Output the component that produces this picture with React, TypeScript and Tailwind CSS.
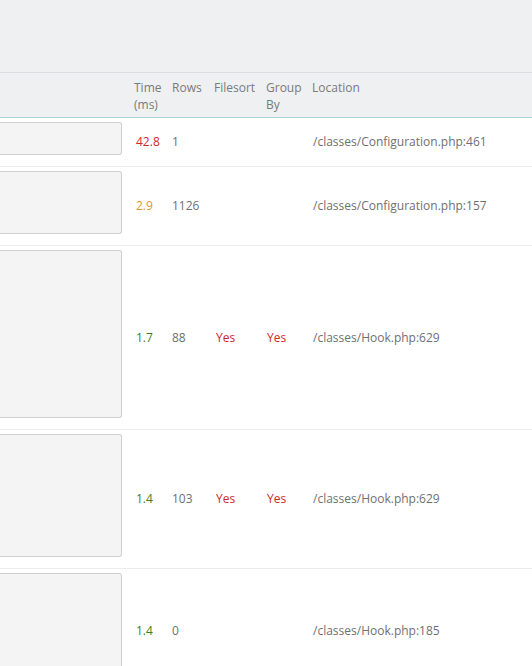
const rows = [
  { h: "h-[33px]", time: "42.8", tone: "text-[#d0272c]", rows: "1", filesort: "", group: "", loc: "/classes/Configuration.php:461" },
  { h: "h-[63px]", time: "2.9", tone: "text-[#e0952f]", rows: "1126", filesort: "", group: "", loc: "/classes/Configuration.php:157" },
  { h: "h-[168px]", time: "1.7", tone: "text-[#3f7f23]", rows: "88", filesort: "Yes", group: "Yes", loc: "/classes/Hook.php:629" },
  { h: "h-[123px]", time: "1.4", tone: "text-[#3f7f23]", rows: "103", filesort: "Yes", group: "Yes", loc: "/classes/Hook.php:629" },
  { h: "h-[108px]", time: "1.4", tone: "text-[#3f7f23]", rows: "0", filesort: "", group: "", loc: "/classes/Hook.php:185" },
];

export default function App() {
  return (
    <div className="w-[532px] h-[666px] overflow-hidden bg-white text-[12px] text-[#707070]" style={{ fontFamily: '"Open Sans", "Noto Sans", sans-serif' }}>
      <div className="h-[73px] bg-[#eff0f2] border-b border-[#dcdee2]" />
      <div className="grid grid-cols-[129px_38px_42px_52px_46px_1fr] bg-[#eff0f2] border-b border-[#a9d3df] text-[#7a7a7a] leading-[17px]">
        <div />
        <div className="pl-[5px] pt-[6px] pb-[4px]">Time<br />(ms)</div>
        <div className="pl-[5px] pt-[6px]">Rows</div>
        <div className="pl-[5px] pt-[6px]">Filesort</div>
        <div className="pl-[5px] pt-[6px]">Group<br />By</div>
        <div className="pl-[5px] pt-[6px]">Location</div>
      </div>
      {rows.map((r, i) => (
        <div key={i} className="grid grid-cols-[129px_38px_42px_52px_46px_1fr] items-center border-b border-[#ececec]">
          <div className="pt-[4px] pb-[11px] pr-[7px]">
            <div className={`${r.h} bg-[#f4f4f4] border border-l-0 border-[#cfcfcf] rounded-r-[3px]`} />
          </div>
          <div className={`pl-[7px] ${r.tone}`}>{r.time}</div>
          <div className="pl-[5px]">{r.rows}</div>
          <div className="pl-[7px] text-[#d0272c]">{r.filesort}</div>
          <div className="pl-[6px] text-[#d0272c]">{r.group}</div>
          <div className="pl-[6px] whitespace-nowrap">{r.loc}</div>
        </div>
      ))}
    </div>
  );
}
